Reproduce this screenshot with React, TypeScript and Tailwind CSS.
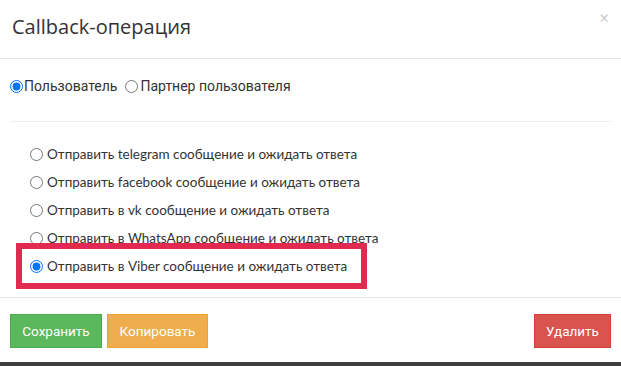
import React from "react";

const options = [
  { label: "Отправить telegram сообщение и ожидать ответа", checked: false },
  { label: "Отправить facebook сообщение и ожидать ответа", checked: false },
  { label: "Отправить в vk сообщение и ожидать ответа", checked: false },
  { label: "Отправить в WhatsApp сообщение и ожидать ответа", checked: false },
  { label: "Отправить в Viber сообщение и ожидать ответа", checked: true },
];

const Radio: React.FC<{ checked?: boolean; name: string }> = ({ checked, name }) => (
  <input
    type="radio"
    name={name}
    defaultChecked={checked}
    className="m-0 w-[13px] h-[13px] flex-shrink-0"
  />
);

export default function App() {
  return (
    <div
      className="w-[621px] h-[366px] bg-[#3d3d3d] text-[#333]"
      style={{ fontFamily: 'Lato, "Open Sans", sans-serif' }}
    >
      <div className="relative bg-white h-[362px] flex flex-col">
        {/* header */}
        <div className="h-[59px] border-b border-[#e5e5e5] pl-[12px] pr-[12px] flex items-start justify-between">
          <h4 className="mt-[13px] text-[20px] leading-[28px] text-[#333] font-['Open_Sans',sans-serif]">
            Callback-операция
          </h4>
          <span className="mt-[6px] text-[17px] leading-[24px] text-[#c9c9c9]">×</span>
        </div>

        {/* body */}
        <div className="flex-1 px-[10px]">
          <div className="pt-[17px] h-[63px] border-b border-[#eeeeee] flex items-start text-[14px] font-['Roboto',sans-serif]">
            <label className="h-[20px] flex items-center gap-[1px]">
              <Radio name="who" checked />
              <span>Пользователь</span>
            </label>
            <label className="ml-[8px] h-[20px] flex items-center gap-[2px]">
              <Radio name="who" />
              <span>Партнер пользователя</span>
            </label>
          </div>

          <div className="pt-[18px] pl-[20px] flex flex-col text-[13.5px]">
            {options.map((o) => (
              <label key={o.label} className="h-[28px] flex items-center gap-[4px]">
                <Radio name="op" checked={o.checked} />
                <span>{o.label}</span>
              </label>
            ))}
          </div>
        </div>

        {/* footer */}
        <div className="h-[65px] border-t border-[#e5e5e5] px-[10px] pt-[16px] flex items-start gap-[5px] text-[13.5px] font-['Roboto',sans-serif]">
          <button className="h-[34px] w-[92px] bg-[#5cb85c] border border-[#4cae4c] text-white">
            Сохранить
          </button>
          <button className="h-[34px] w-[101px] bg-[#f0ad4e] border border-[#eea236] text-white">
            Копировать
          </button>
          <button className="ml-auto h-[34px] w-[77px] bg-[#d9534f] border border-[#d43f3a] text-white">
            Удалить
          </button>
        </div>

        {/* highlight annotation */}
        <div className="absolute left-[16px] top-[243px] w-[351px] h-[46px] border-[6px] border-[#e2294f] pointer-events-none" />
      </div>
    </div>
  );
}
